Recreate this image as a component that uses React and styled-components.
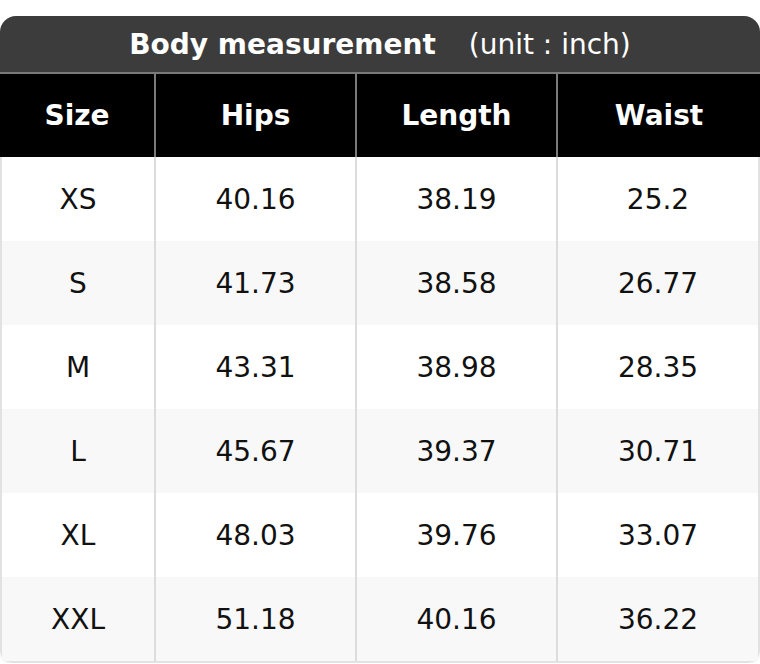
import React from "react";
import styled, { createGlobalStyle } from "styled-components";

const Global = createGlobalStyle`
  html, body { margin: 0; padding: 0; background: #ffffff; }
  body { font-family: "DejaVu Sans", Verdana, sans-serif; }
  * { box-sizing: border-box; }
`;

const Card = styled.div`
  margin-top: 16px;
  width: 760px;
  border-radius: 16px 16px 12px 12px;
  overflow: hidden;
  background: #fff;
  box-shadow: 0 1px 2px rgba(0, 0, 0, 0.08);
`;

const TitleBar = styled.div`
  height: 58px;
  background: #3c3c3c;
  color: #fff;
  display: flex;
  align-items: center;
  justify-content: center;
  font-size: 28px;
  border-bottom: 2px solid #7a7a7a;
`;

const TitleMain = styled.span`
  font-weight: bold;
`;

const TitleUnit = styled.span`
  margin-left: 33px;
  font-weight: normal;
`;

const Grid = styled.div`
  display: grid;
  grid-template-columns: ${(p) => p.$first}px 201px 201px 1fr;
`;

const Body = styled.div`
  border-left: 2px solid #e2e2e2;
  border-right: 2px solid #e2e2e2;
  border-bottom: 2px solid #e2e2e2;
  border-radius: 0 0 12px 12px;
`;

const HeadCell = styled.div`
  height: 83px;
  background: #000;
  color: #fff;
  font-weight: bold;
  font-size: 28px;
  display: flex;
  align-items: center;
  justify-content: center;
  border-left: ${(p) => (p.$first ? "none" : "2px solid #7a7a7a")};
`;

const Cell = styled.div`
  height: 84px;
  background: ${(p) => (p.$alt ? "#f8f8f8" : "#ffffff")};
  color: #111;
  font-size: 28px;
  display: flex;
  align-items: center;
  justify-content: center;
  border-left: ${(p) => (p.$first ? "none" : "2px solid #dcdcdc")};
`;

const heads = ["Size", "Hips", "Length", "Waist"];
const rows = [
  ["XS", "40.16", "38.19", "25.2"],
  ["S", "41.73", "38.58", "26.77"],
  ["M", "43.31", "38.98", "28.35"],
  ["L", "45.67", "39.37", "30.71"],
  ["XL", "48.03", "39.76", "33.07"],
  ["XXL", "51.18", "40.16", "36.22"],
];

export default function App() {
  return (
    <>
      <Global />
      <Card>
        <TitleBar>
          <TitleMain>Body measurement</TitleMain>
          <TitleUnit>(unit : inch)</TitleUnit>
        </TitleBar>
        <Grid $first={154}>
          {heads.map((h, i) => (
            <HeadCell key={h} $first={i === 0}>
              {h}
            </HeadCell>
          ))}
        </Grid>
        <Body>
          <Grid $first={152}>
            {rows.map((r, ri) =>
              r.map((v, ci) => (
                <Cell key={ri + "-" + ci} $first={ci === 0} $alt={ri % 2 === 1}>
                  {v}
                </Cell>
              ))
            )}
          </Grid>
        </Body>
      </Card>
    </>
  );
}
